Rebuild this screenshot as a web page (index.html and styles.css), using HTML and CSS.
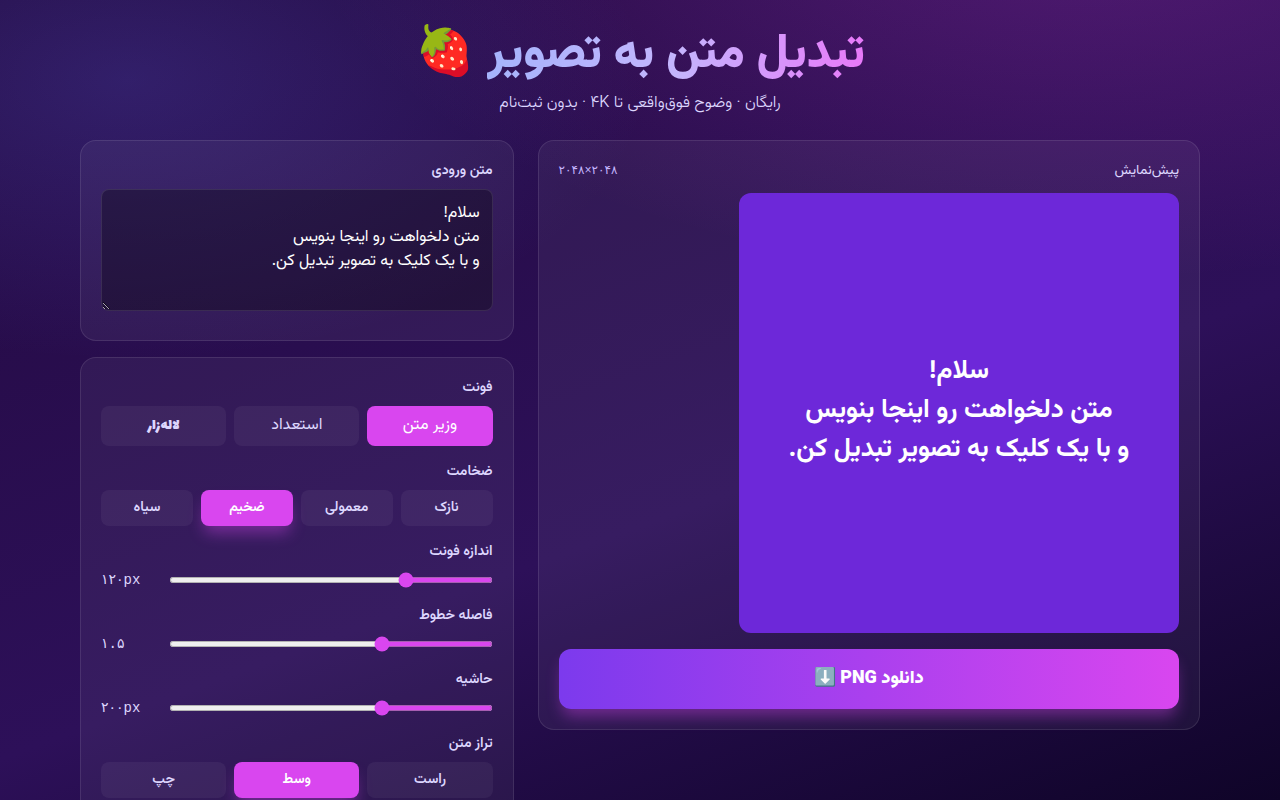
FILE: index.html
```html
<!DOCTYPE html>
<html lang="fa" dir="rtl">
<head>
    <meta charset="UTF-8">
    <meta name="viewport" content="width=device-width, initial-scale=1.0">
    <title>تبدیل متن به تصویر</title>
    <link rel="stylesheet" href="styles.css">
</head>
<body>
    <div class="page">
        <!-- Header -->
        <header class="hero">
            <h1><span class="hero-title">تبدیل متن به تصویر</span> <span class="emoji">🍓</span></h1>
            <p>رایگان · وضوح فوق‌واقعی تا ۴K · بدون ثبت‌نام</p>
        </header>

        <main class="layout">
            <!-- Preview -->
            <section class="card preview">
                <div class="preview-head">
                    <h2>پیش‌نمایش</h2>
                    <span class="size">۲۰۴۸×۲۰۴۸</span>
                </div>
                <div class="canvas">
                    <p>سلام!<br>متن دلخواهت رو اینجا بنویس<br>و با یک کلیک به تصویر تبدیل کن.</p>
                </div>
                <button type="button" class="download">دانلود PNG <span class="emoji">⬇️</span></button>
            </section>

            <!-- Controls -->
            <div class="controls">
                <section class="card">
                    <label class="label" for="text">متن ورودی</label>
                    <textarea id="text" rows="4">سلام!
متن دلخواهت رو اینجا بنویس
و با یک کلیک به تصویر تبدیل کن.</textarea>
                </section>

                <section class="card">
                    <div class="field" role="group" aria-labelledby="font-label">
                        <span class="label" id="font-label">فونت</span>
                        <div class="options three fonts">
                            <button type="button" class="option active">وزیر متن</button>
                            <button type="button" class="option estedad">استعداد</button>
                            <button type="button" class="option lalezar">لاله‌زار</button>
                        </div>
                    </div>

                    <div class="field" role="group" aria-labelledby="weight-label">
                        <span class="label" id="weight-label">ضخامت</span>
                        <div class="options four">
                            <button type="button" class="option">نازک</button>
                            <button type="button" class="option">معمولی</button>
                            <button type="button" class="option active glow">ضخیم</button>
                            <button type="button" class="option">سیاه</button>
                        </div>
                    </div>

                    <div class="field">
                        <label class="label" for="font-size">اندازه فونت</label>
                        <div class="slider">
                            <input type="range" id="font-size" min="24" max="400" value="120">
                            <output for="font-size">۱۲۰px</output>
                        </div>
                    </div>

                    <div class="field">
                        <label class="label" for="line-height">فاصله خطوط</label>
                        <div class="slider">
                            <input type="range" id="line-height" min="1" max="2.5" step="0.05" value="1.5">
                            <output for="line-height">۱.۵</output>
                        </div>
                    </div>

                    <div class="field">
                        <label class="label" for="padding">حاشیه</label>
                        <div class="slider">
                            <input type="range" id="padding" min="0" max="600" value="200">
                            <output for="padding">۲۰۰px</output>
                        </div>
                    </div>

                    <div class="field" role="group" aria-labelledby="align-label">
                        <span class="label" id="align-label">تراز متن</span>
                        <div class="options three">
                            <button type="button" class="option">راست</button>
                            <button type="button" class="option active glow">وسط</button>
                            <button type="button" class="option">چپ</button>
                        </div>
                    </div>
                </section>
            </div>
        </main>
    </div>
</body>
</html>
```

FILE: styles.css
```css
/* Global Styles */
* {
    box-sizing: border-box;
    margin: 0;
}

html {
    background-color: #0f0428;
}

body {
    min-height: 100vh;
    font-family: Vazirmatn, "Noto Sans Arabic", Roboto, "DejaVu Sans", sans-serif;
    font-size: 16px;
    line-height: 24px;
    color: #f5f3ff;
    background:
        radial-gradient(520px 280px at 10% 10%, rgba(99, 102, 241, 0.22), transparent),
        radial-gradient(780px 360px at 85% -10%, rgba(217, 70, 239, 0.24), transparent),
        linear-gradient(160deg, #230a40 0%, #2d1059 60%, #0f0428 100%);
    background-attachment: fixed;
}

button,
textarea {
    font-family: inherit;
}

.page {
    max-width: 1152px;
    margin: 0 auto;
    padding: 24px 16px;
}

/* Header */
.hero {
    text-align: center;
    margin-bottom: 24px;
}

.hero h1 {
    font-size: 48px;
    line-height: 64px;
    font-weight: 900;
}

.hero-title {
    color: transparent;
    background: linear-gradient(to left, #e879f9, #c4b5fd, #a5b4fc);
    -webkit-background-clip: text;
    background-clip: text;
}

.hero p {
    margin-top: 4px;
    color: #ddd6fe;
    font-weight: 300;
}

.emoji {
    line-height: 1;
}

/* Layout */
.layout {
    display: grid;
    grid-template-columns: repeat(5, 1fr);
    gap: 24px;
    align-items: start;
}

.preview {
    grid-column: span 3;
}

.controls {
    grid-column: span 2;
    display: grid;
    gap: 16px;
}

.card {
    padding: 20px;
    border: 1px solid rgba(255, 255, 255, 0.1);
    border-radius: 16px;
    background-color: rgba(255, 255, 255, 0.05);
}

.label {
    display: block;
    margin-bottom: 8px;
    font-size: 14px;
    line-height: 20px;
    font-weight: 600;
    color: #ddd6fe;
}

/* Preview */
.preview-head {
    display: flex;
    align-items: center;
    justify-content: space-between;
    margin-bottom: 12px;
}

.preview-head h2 {
    font-size: 14px;
    line-height: 20px;
    font-weight: 400;
    color: #ddd6fe;
}

.size {
    font-family: "Liberation Mono", "DejaVu Sans", monospace;
    font-size: 12px;
    line-height: 16px;
    color: #c4b5fd;
}

.canvas {
    display: flex;
    align-items: center;
    justify-content: center;
    max-width: 440px;
    aspect-ratio: 1;
    margin-bottom: 16px;
    padding-bottom: 6px;
    border-radius: 12px;
    background-color: #6d28d9;
    text-align: center;
}

.canvas p {
    font-size: 26px;
    line-height: 39px;
    font-weight: 700;
    color: white;
}

.download {
    display: block;
    width: 100%;
    padding: 16px;
    border: none;
    border-radius: 12px;
    background: linear-gradient(to left, #d946ef, #7c3aed);
    box-shadow: 0 10px 15px -3px rgba(217, 70, 239, 0.4);
    color: white;
    font-size: 18px;
    line-height: 28px;
    font-weight: 900;
    cursor: pointer;
}

/* Text input */
textarea {
    width: 100%;
    height: 122px;
    padding: 12px;
    border: 1px solid rgba(255, 255, 255, 0.1);
    border-radius: 8px;
    background-color: rgba(0, 0, 0, 0.3);
    color: white;
    font-size: 16px;
    line-height: 24px;
    resize: vertical;
}

/* Option buttons */
.field {
    margin-bottom: 16px;
}

.options {
    display: grid;
    gap: 8px;
}

.three {
    grid-template-columns: repeat(3, 1fr);
}

.four {
    grid-template-columns: repeat(4, 1fr);
}

.option {
    padding: 8px;
    border: none;
    border-radius: 8px;
    background-color: rgba(255, 255, 255, 0.05);
    color: #ddd6fe;
    font-size: 14px;
    line-height: 20px;
    font-weight: 600;
    cursor: pointer;
}

.fonts .option {
    font-size: 16px;
    line-height: 24px;
    font-weight: 400;
}

.fonts .estedad {
    font-family: Estedad, Vazirmatn, "Noto Sans Arabic", sans-serif;
}

.fonts .lalezar {
    font-family: Lalezar, Vazirmatn, sans-serif;
}

.option.active {
    background-color: #d946ef;
    color: white;
}

.glow {
    box-shadow: 0 10px 15px -3px rgba(217, 70, 239, 0.4);
}

/* Sliders */
.slider {
    display: flex;
    align-items: center;
    gap: 12px;
    height: 20px;
}

.slider input {
    flex: 1;
    min-width: 0;
    height: 6px;
    margin: 0;
    accent-color: #d946ef;
}

.slider output {
    width: 56px;
    font-family: "Liberation Mono", "DejaVu Sans", monospace;
    font-size: 14px;
    line-height: 20px;
    text-align: left;
    direction: ltr;
    color: #ddd6fe;
}

@media (max-width: 800px) {
    .layout {
        grid-template-columns: 1fr;
    }

    .preview,
    .controls {
        grid-column: auto;
    }
}
```
